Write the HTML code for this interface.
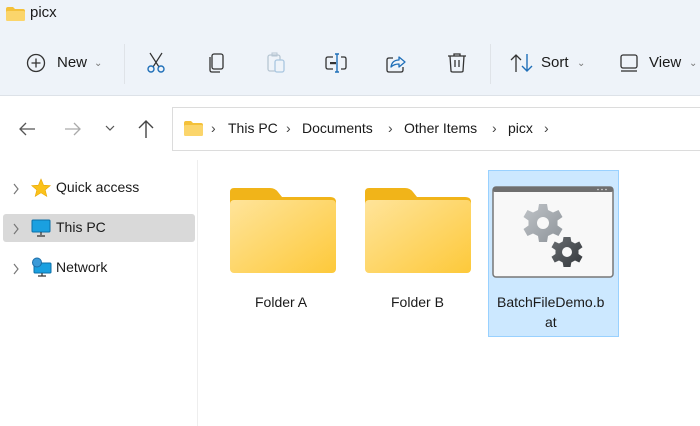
<!DOCTYPE html>
<html><head><meta charset="utf-8">
<style>
*{margin:0;padding:0;box-sizing:border-box}
body{width:700px;height:426px;overflow:hidden;background:#fff;font-family:"Segoe UI","Liberation Sans",sans-serif;color:#1a1a1a;position:relative}
.top{position:absolute;left:0;top:0;width:700px;height:96px;background:#eef3f9;border-bottom:1px solid #dde2e8}
.abs{position:absolute}
.t{position:absolute;font-size:15px;white-space:nowrap}
.sep{position:absolute;width:1px;background:#dfe3e8}
.chev{font-size:10px;color:#777}
</style></head><body>
<div class="top"></div>
<!-- title -->
<svg class="abs" style="left:6px;top:7px" width="19" height="14"><path d="M0 2Q0 0 2 0H7L9 2H17Q19 2 19 4V12Q19 14 17 14H2Q0 14 0 12Z" fill="#f4c13a"/><rect x="0" y="4" width="19" height="10" rx="1.5" fill="#fbd56b"/></svg>
<div class="t" style="left:30px;top:4px;font-size:15px">picx</div>
<!-- toolbar -->
<svg class="abs" style="left:26px;top:53px" width="20" height="20"><circle cx="10" cy="10" r="8.5" fill="none" stroke="#333" stroke-width="1.3"/><path d="M10 5.5V14.5M5.5 10H14.5" stroke="#333" stroke-width="1.3"/></svg>
<div class="t" style="left:57px;top:54px">New</div>
<div class="t chev" style="left:94px;top:58px">&#8964;</div>
<div class="sep" style="left:124px;top:44px;height:40px"></div>
<svg class="abs" style="left:146px;top:52px" width="20" height="22"><path d="M4 1L13 15M16 1L7 15" stroke="#333" stroke-width="1.2"/><circle cx="5" cy="17" r="3" fill="none" stroke="#1f6fb8" stroke-width="1.4"/><circle cx="15" cy="17" r="3" fill="none" stroke="#1f6fb8" stroke-width="1.4"/></svg>
<svg class="abs" style="left:208px;top:53px" width="18" height="20"><rect x="4" y="1" width="11" height="15" rx="2" fill="none" stroke="#333" stroke-width="1.3"/><path d="M2 4V17Q2 19 4 19H12" fill="none" stroke="#333" stroke-width="1.3"/></svg>
<svg class="abs" style="left:266px;top:52px" width="20" height="22"><rect x="2" y="3" width="12" height="16" rx="2" fill="none" stroke="#b7c6d3" stroke-width="1.3"/><rect x="6" y="1" width="5" height="3" fill="none" stroke="#b7c6d3"/><rect x="9" y="8" width="9" height="12" rx="2" fill="#eef3f9" stroke="#a9c6e0" stroke-width="1.3"/></svg>
<svg class="abs" style="left:325px;top:52px" width="24" height="22"><path d="M8 5H3Q1 5 1 7V15Q1 17 3 17H8M16 5H19Q21 5 21 7V15Q21 17 19 17H16" fill="none" stroke="#333" stroke-width="1.3"/><rect x="5" y="10" width="6" height="2.2" fill="#333"/><path d="M12 2V20M10 2H14M10 20H14" stroke="#1f6fb8" stroke-width="1.4"/></svg>
<svg class="abs" style="left:386px;top:52px" width="22" height="22"><path d="M7 6H3Q1 6 1 8V18Q1 20 3 20H15Q17 20 17 18V15" fill="none" stroke="#333" stroke-width="1.3"/><path d="M5 15Q6 8 13 8V5L19 10L13 15V12Q8 12 5 15Z" fill="none" stroke="#1f6fb8" stroke-width="1.3" stroke-linejoin="round"/></svg>
<svg class="abs" style="left:447px;top:52px" width="20" height="22"><path d="M1 4H19M7 4V2H13V4M3 4L4 19Q4 20 6 20H14Q16 20 16 19L17 4M8 8V15M12 8V15" fill="none" stroke="#333" stroke-width="1.3"/></svg>
<div class="sep" style="left:490px;top:44px;height:40px"></div>
<svg class="abs" style="left:510px;top:53px" width="24" height="20"><path d="M6 19V2M1 7L6 2L11 7" fill="none" stroke="#333" stroke-width="1.3"/><path d="M17 1V18M12 13L17 18L22 13" fill="none" stroke="#1f6fb8" stroke-width="1.4"/></svg>
<div class="t" style="left:541px;top:54px">Sort</div>
<div class="t chev" style="left:577px;top:58px">&#8964;</div>
<svg class="abs" style="left:620px;top:54px" width="18" height="18"><rect x="1" y="1" width="16" height="13" rx="2" fill="none" stroke="#333" stroke-width="1.3"/><path d="M1 17H17" stroke="#333" stroke-width="1.3"/></svg>
<div class="t" style="left:649px;top:54px">View</div>
<div class="t chev" style="left:689px;top:58px">&#8964;</div>
<!-- nav -->
<svg class="abs" style="left:18px;top:121px" width="18" height="16"><path d="M17 8H2M8 2L2 8L8 14" fill="none" stroke="#555" stroke-width="1.3"/></svg>
<svg class="abs" style="left:64px;top:121px" width="18" height="16"><path d="M1 8H16M10 2L16 8L10 14" fill="none" stroke="#aaa" stroke-width="1.3"/></svg>
<svg class="abs" style="left:105px;top:124px" width="10" height="8"><path d="M1 2L5 6L9 2" fill="none" stroke="#555" stroke-width="1.2"/></svg>
<svg class="abs" style="left:137px;top:119px" width="18" height="20"><path d="M9 19V2M2 9L9 2L16 9" fill="none" stroke="#444" stroke-width="1.4"/></svg>
<div class="abs" style="left:172px;top:107px;width:540px;height:44px;border:1px solid #dcdcdc;background:#fff"></div>
<svg class="abs" style="left:184px;top:121px" width="19" height="15"><path d="M0 2Q0 0 2 0H7L9 2H17Q19 2 19 4V13Q19 15 17 15H2Q0 15 0 13Z" fill="#f4c13a"/><rect x="0" y="4" width="19" height="11" rx="1.5" fill="#fbd56b"/></svg>
<div class="t" style="left:211px;top:120px;font-size:14px;color:#444">&rsaquo;</div>
<div class="t" style="left:228px;top:120px;font-size:14px">This PC</div>
<div class="t" style="left:286px;top:120px;font-size:14px;color:#444">&rsaquo;</div>
<div class="t" style="left:302px;top:120px;font-size:14px">Documents</div>
<div class="t" style="left:388px;top:120px;font-size:14px;color:#444">&rsaquo;</div>
<div class="t" style="left:404px;top:120px;font-size:14px">Other Items</div>
<div class="t" style="left:492px;top:120px;font-size:14px;color:#444">&rsaquo;</div>
<div class="t" style="left:508px;top:120px;font-size:14px">picx</div>
<div class="t" style="left:544px;top:120px;font-size:14px;color:#444">&rsaquo;</div>
<!-- sidebar -->
<div class="sep" style="left:197px;top:160px;height:266px;background:#eeeeee"></div>
<div class="abs" style="left:3px;top:214px;width:192px;height:28px;background:#d9d9d9;border-radius:3px"></div>
<svg class="abs" style="left:12px;top:183px" width="8" height="12"><path d="M2 1L6 6L2 11" fill="none" stroke="#777" stroke-width="1.2"/></svg>
<svg class="abs" style="left:12px;top:223px" width="8" height="12"><path d="M2 1L6 6L2 11" fill="none" stroke="#777" stroke-width="1.2"/></svg>
<svg class="abs" style="left:12px;top:263px" width="8" height="12"><path d="M2 1L6 6L2 11" fill="none" stroke="#777" stroke-width="1.2"/></svg>
<svg class="abs" style="left:31px;top:178px" width="20" height="20"><path d="M10 1L12.6 7.2L19.3 7.6L14.2 11.9L15.8 18.4L10 14.8L4.2 18.4L5.8 11.9L0.7 7.6L7.4 7.2Z" fill="#fbc21b" stroke="#e8a600" stroke-width=".6"/></svg>
<div class="t" style="left:56px;top:179px;font-size:14px">Quick access</div>
<svg class="abs" style="left:31px;top:219px" width="20" height="18"><rect x="1" y="1" width="18" height="12" rx="1" fill="#1aa0e0" stroke="#0c6fa8"/><path d="M10 13V16M6 17H14" stroke="#333" stroke-width="1.2"/></svg>
<div class="t" style="left:56px;top:219px;font-size:14px">This PC</div>
<svg class="abs" style="left:31px;top:257px" width="21" height="20"><rect x="3" y="6" width="17" height="10" rx="1" fill="#1aa0e0" stroke="#0c6fa8"/><circle cx="6" cy="5.5" r="4.5" fill="#3b9ad8" stroke="#1c6ea8"/><path d="M11 16V19M7 19H15" stroke="#333" stroke-width="1.2"/></svg>
<div class="t" style="left:56px;top:259px;font-size:14px">Network</div>
<!-- folders -->
<svg class="abs" style="left:230px;top:188px" width="106" height="85">
<defs><linearGradient id="g" x1="0" y1="0" x2="1" y2="1"><stop offset="0" stop-color="#ffe49a"/><stop offset="1" stop-color="#fdc93a"/></linearGradient></defs>
<path d="M0 4Q0 0 4 0H40Q45 0 48 4L52 9H100Q106 9 106 14V60H0Z" fill="#f1b419"/>
<rect x="0" y="12" width="106" height="73" rx="4" fill="url(#g)"/></svg>
<div class="t" style="left:255px;top:294px;font-size:14px">Folder A</div>
<svg class="abs" style="left:365px;top:188px" width="106" height="85">
<path d="M0 4Q0 0 4 0H40Q45 0 48 4L52 9H100Q106 9 106 14V60H0Z" fill="#f1b419"/>
<rect x="0" y="12" width="106" height="73" rx="4" fill="url(#g)"/></svg>
<div class="t" style="left:391px;top:294px;font-size:14px">Folder B</div>
<!-- selected bat -->
<div class="abs" style="left:488px;top:170px;width:131px;height:167px;background:#cce8ff;border:1px solid #99d1ff"></div>
<svg class="abs" style="left:492px;top:186px" width="122" height="92">
<defs><linearGradient id="gg" x1="0" y1="0" x2="1" y2="1"><stop offset="0" stop-color="#c0c4c8"/><stop offset="1" stop-color="#8d9399"/></linearGradient><linearGradient id="gd" x1="0" y1="0" x2="1" y2="1"><stop offset="0" stop-color="#6a6e72"/><stop offset="1" stop-color="#33373b"/></linearGradient></defs>
<rect x="1" y="1" width="120" height="90" rx="3" fill="#f8f8f8" stroke="#777" stroke-width="1.5"/>
<rect x="1" y="1" width="120" height="5" rx="2" fill="#6f6f6f"/>
<circle cx="106" cy="3.5" r=".8" fill="#ddd"/><circle cx="110" cy="3.5" r=".8" fill="#ddd"/><circle cx="114" cy="3.5" r=".8" fill="#ddd"/>
<g transform="translate(51 37)"><path d="M-4 -19H4L5 -13L10 -10.5L15.5 -13L19.5 -6L14.5 -2.5V2.5L19.5 6L15.5 13L10 10.5L5 13L4 19H-4L-5 13L-10 10.5L-15.5 13L-19.5 6L-14.5 2.5V-2.5L-19.5 -6L-15.5 -13L-10 -10.5L-5 -13Z" fill="url(#gg)"/><circle r="6" fill="#f8f8f8"/></g>
<g transform="translate(75 66)"><path d="M-3.5 -15H3.5L4.3 -10.5L8 -8.5L12.3 -10.5L15.5 -4.8L11.5 -2V2L15.5 4.8L12.3 10.5L8 8.5L4.3 10.5L3.5 15H-3.5L-4.3 10.5L-8 8.5L-12.3 10.5L-15.5 4.8L-11.5 2V-2L-15.5 -4.8L-12.3 -10.5L-8 -8.5L-4.3 -10.5Z" fill="url(#gd)"/><circle r="5" fill="#f8f8f8"/></g>
</svg>
<div class="t" style="left:497px;top:294px;font-size:14px">BatchFileDemo.b</div>
<div class="t" style="left:545px;top:314px;font-size:14px">at</div>
</body></html>
